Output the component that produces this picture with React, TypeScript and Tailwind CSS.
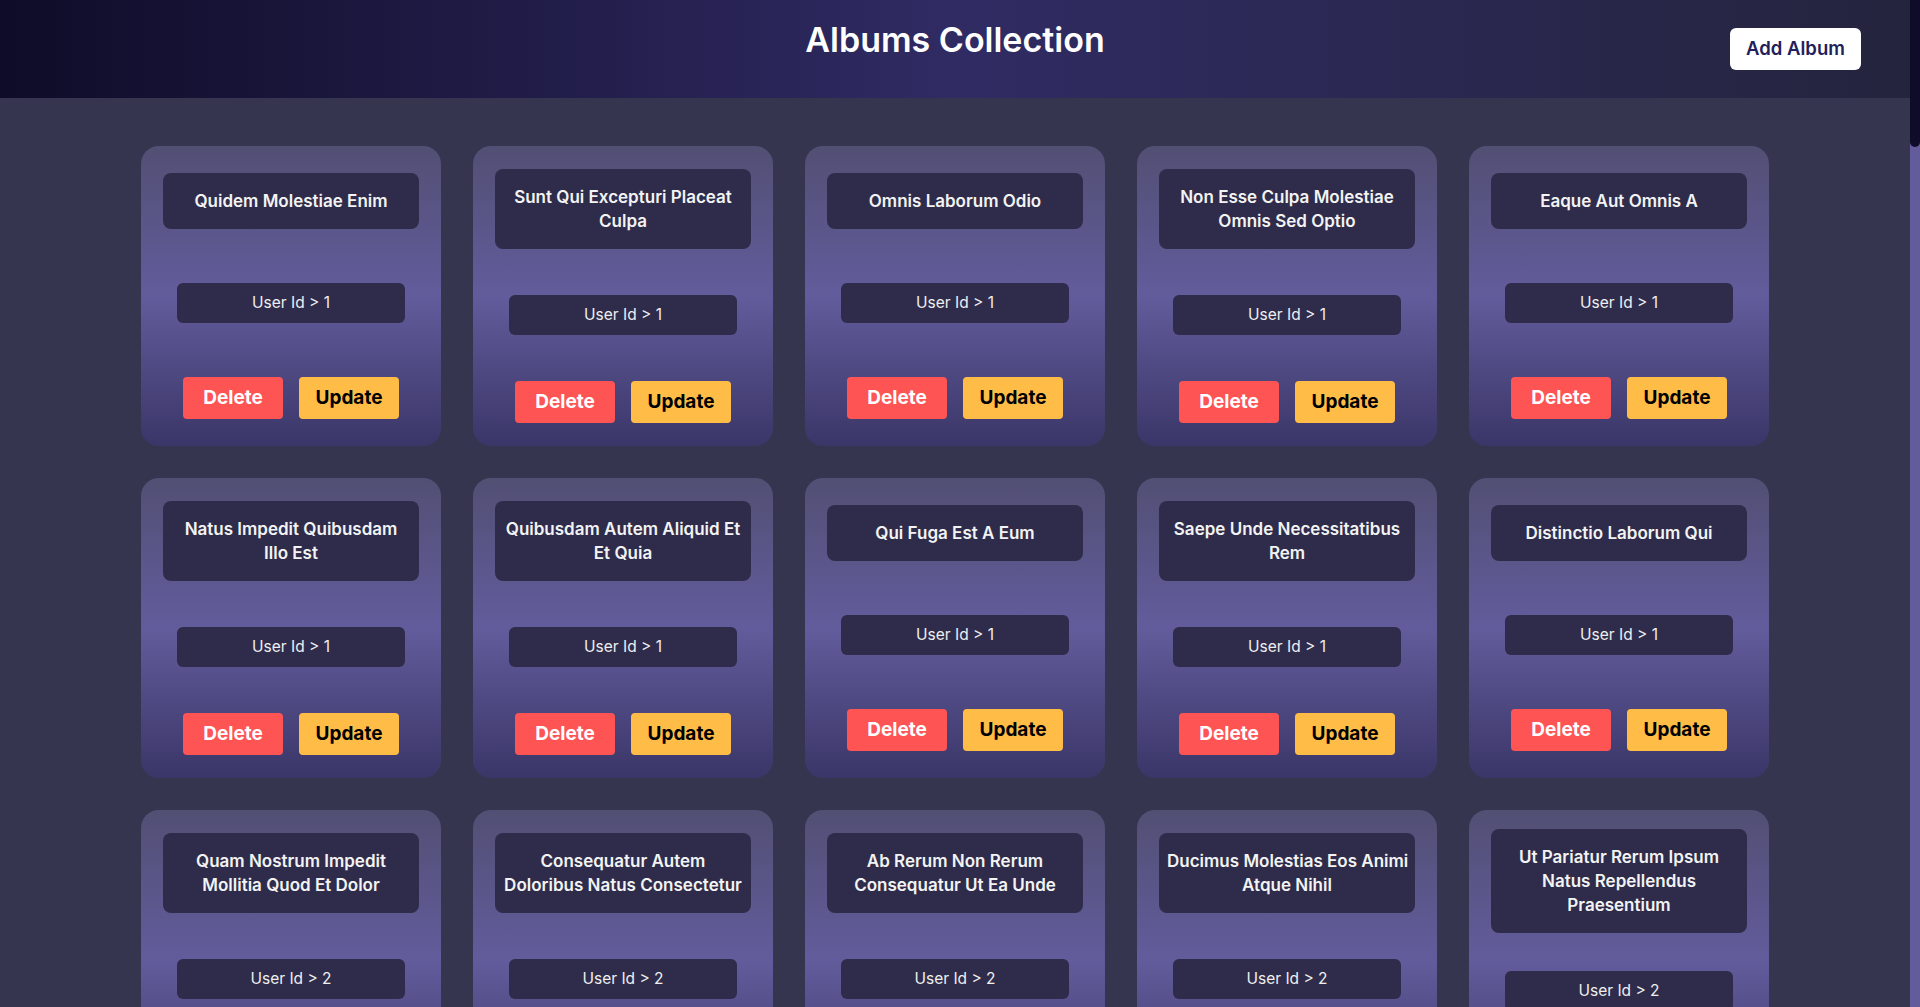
import React from "react";

const titles: string[][] = [
  ["Quidem Molestiae Enim"],
  ["Sunt Qui Excepturi Placeat", "Culpa"],
  ["Omnis Laborum Odio"],
  ["Non Esse Culpa Molestiae", "Omnis Sed Optio"],
  ["Eaque Aut Omnis A"],
  ["Natus Impedit Quibusdam", "Illo Est"],
  ["Quibusdam Autem Aliquid Et", "Et Quia"],
  ["Qui Fuga Est A Eum"],
  ["Saepe Unde Necessitatibus", "Rem"],
  ["Distinctio Laborum Qui"],
  ["Quam Nostrum Impedit", "Mollitia Quod Et Dolor"],
  ["Consequatur Autem", "Doloribus Natus Consectetur"],
  ["Ab Rerum Non Rerum", "Consequatur Ut Ea Unde"],
  ["Ducimus Molestias Eos Animi", "Atque Nihil"],
  ["Ut Pariatur Rerum Ipsum", "Natus Repellendus", "Praesentium"],
];

type Album = { id: number; userId: number; lines: string[] };

const albums: Album[] = titles.map((lines, i) => ({
  id: i + 1,
  userId: Math.floor(i / 10) + 1,
  lines,
}));

function AlbumCard({ album }: { album: Album }) {
  return (
    <div className="flex h-[300px] w-[300px] flex-col items-center justify-around rounded-[18px] bg-linear-to-b from-[#524f74] via-[#625c9c] to-[#3b3668] px-[22px]">
      <div className="w-full rounded-lg bg-[#2e2c4a] px-2 py-4 text-center text-[17px] font-semibold leading-6 text-[#f3f3f3]">
        {album.lines.map((l, i) => (
          <div key={i} className="whitespace-nowrap">
            {l}
          </div>
        ))}
      </div>
      <div className="flex h-10 w-[228px] items-center justify-center rounded-md bg-[#2e2c4a] text-[15.5px] text-[#efefef]">
        User Id &gt; {album.userId}
      </div>
      <div className="flex gap-4">
        <button className="h-[42px] w-[100px] rounded-[4px] bg-[#fe5454] text-[19px] font-bold text-white">
          Delete
        </button>
        <button className="h-[42px] w-[100px] rounded-[4px] bg-[#ffbd47] text-[19px] font-bold text-black">
          Update
        </button>
      </div>
    </div>
  );
}

export default function App() {
  return (
    <div className="flex h-screen bg-[#363550]" style={{ fontFamily: "Inter, 'Noto Sans', sans-serif" }}>
      <div className="min-w-0 flex-1 overflow-y-auto [scrollbar-width:none]">
        <header className="grid h-[98px] grid-cols-[1fr_auto_1fr] bg-linear-to-r from-[#0f0c29] via-[#302b63] to-[#24243e]">
          <div />
          <h1 className="mt-4 text-[34px] font-semibold leading-[48px] text-white">Albums Collection</h1>
          <div className="flex justify-end">
            <button className="mr-[49px] mt-[28px] h-[42px] w-[131px] rounded-md bg-white text-[18.5px] font-semibold text-[#22205a]">
              Add Album
            </button>
          </div>
        </header>
        <main className="grid grid-cols-[repeat(5,300px)] justify-center gap-8 pb-12 pt-12">
          {albums.map((a) => (
            <AlbumCard key={a.id} album={a} />
          ))}
        </main>
      </div>
      <div className="flex h-screen w-[10px] shrink-0 flex-col bg-[#625c9c]">
        <div className="h-[147px] rounded-b-[5px] bg-[#0f0c29]" />
      </div>
    </div>
  );
}
